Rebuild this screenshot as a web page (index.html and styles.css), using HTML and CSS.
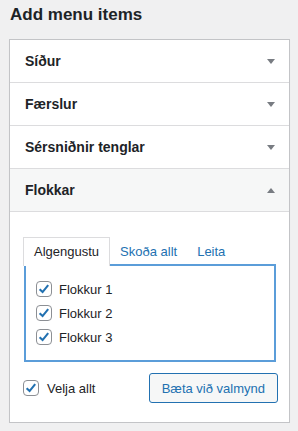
FILE: index.html
```html
<!DOCTYPE html>
<html lang="is">
<head>
    <meta charset="UTF-8">
    <meta name="viewport" content="width=device-width, initial-scale=1.0">
    <title>Add menu items</title>
    <link rel="stylesheet" href="styles.css">
</head>
<body>
    <div class="wrap">
        <h2 class="title">Add menu items</h2>

        <div class="box">
            <div class="section">
                <h3 class="section-title">Síður<span class="arrow"></span></h3>
            </div>
            <div class="section">
                <h3 class="section-title">Færslur<span class="arrow"></span></h3>
            </div>
            <div class="section">
                <h3 class="section-title">Sérsniðnir tenglar<span class="arrow"></span></h3>
            </div>
            <div class="section open">
                <h3 class="section-title">Flokkar<span class="arrow up"></span></h3>

                <div class="section-content">
                    <!-- Flipar -->
                    <ul class="tabs">
                        <li class="tab active">Algengustu</li>
                        <li class="tab">Skoða allt</li>
                        <li class="tab">Leita</li>
                    </ul>

                    <div class="panel">
                        <ul class="checklist">
                            <li><label><span class="check"><svg viewBox="0 0 16 16" width="14" height="14"><path d="M3 8.2 L6.4 11.5 L12.8 3.6" /></svg></span>Flokkur 1</label></li>
                            <li><label><span class="check"><svg viewBox="0 0 16 16" width="14" height="14"><path d="M3 8.2 L6.4 11.5 L12.8 3.6" /></svg></span>Flokkur 2</label></li>
                            <li><label><span class="check"><svg viewBox="0 0 16 16" width="14" height="14"><path d="M3 8.2 L6.4 11.5 L12.8 3.6" /></svg></span>Flokkur 3</label></li>
                        </ul>
                    </div>

                    <div class="actions">
                        <label class="select-all"><span class="check"><svg viewBox="0 0 16 16" width="14" height="14"><path d="M3 8.2 L6.4 11.5 L12.8 3.6" /></svg></span>Velja allt</label>
                        <button type="button" class="button">Bæta við valmynd</button>
                    </div>
                </div>
            </div>
        </div>
    </div>
</body>
</html>
```

FILE: styles.css
```css
body {
    font-family: 'Liberation Sans', Arial, sans-serif;
    background-color: #f0f0f1;
    color: #1d2327;
    margin: 0;
}

.wrap {
    padding: 0 8px 0 9px;
}

.title {
    font-size: 17px;
    font-weight: bold;
    line-height: 22px;
    margin: 0;
    padding: 4px 0 0 1px;
}

.box {
    margin-top: 13px;
    background-color: #fff;
    border: 1px solid #c3c4c7;
    box-shadow: 0 1px 1px rgba(0, 0, 0, 0.04);
}

.section-title {
    display: flex;
    align-items: center;
    justify-content: space-between;
    margin: 0;
    padding: 11px 14px 11px 15px;
    font-size: 14px;
    font-weight: bold;
    line-height: 20px;
    border-bottom: 1px solid #dcdcde;
}

.section:last-child .section-title {
    background-color: #f6f7f7;
}

.arrow {
    width: 0;
    height: 0;
    border-left: 4px solid transparent;
    border-right: 4px solid transparent;
    border-top: 5px solid #787c82;
}

.arrow.up {
    border-top: none;
    border-bottom: 5px solid #787c82;
}

.section-content {
    padding: 25px 12px 19px 13px;
}

.tabs {
    display: flex;
    list-style: none;
    margin: 0;
    padding: 0;
    font-size: 13px;
    line-height: 20px;
}

.tab {
    padding: 4px 9px 2px;
    border: 1px solid transparent;
    border-bottom: none;
    color: #2271b1;
}

.tab.active {
    position: relative;
    z-index: 1;
    margin-bottom: -2px;
    padding: 4px 10px 2px 10px;
    background-color: #fff;
    border-color: #dcdcde;
    color: #1d2327;
}

.panel {
    margin: 0 1px;
    padding: 11px 10px;
    border: 2px solid #5b9dd9;
}

.checklist {
    list-style: none;
    margin: 0;
    padding: 0;
    font-size: 13px;
}

.checklist li,
.checklist label,
.select-all {
    display: flex;
    align-items: center;
    height: 24px;
}

.check {
    display: inline-flex;
    align-items: center;
    justify-content: center;
    box-sizing: border-box;
    width: 16px;
    height: 16px;
    margin-right: 7px;
    border: 1px solid #8c8f94;
    border-radius: 4px;
    background-color: #fff;
}

.check svg path {
    fill: none;
    stroke: #2271b1;
    stroke-width: 2.4;
}

.actions {
    display: flex;
    align-items: center;
    justify-content: space-between;
    margin-top: 11px;
    margin-right: -1px;
}

.select-all {
    font-size: 13px;
}

.select-all .check {
    margin-right: 8px;
}

.button {
    height: 30px;
    padding: 0 12px;
    font-family: inherit;
    font-size: 13px;
    color: #2271b1;
    background-color: #f6f7f7;
    border: 1px solid #2271b1;
    border-radius: 3px;
    cursor: pointer;
}
```
